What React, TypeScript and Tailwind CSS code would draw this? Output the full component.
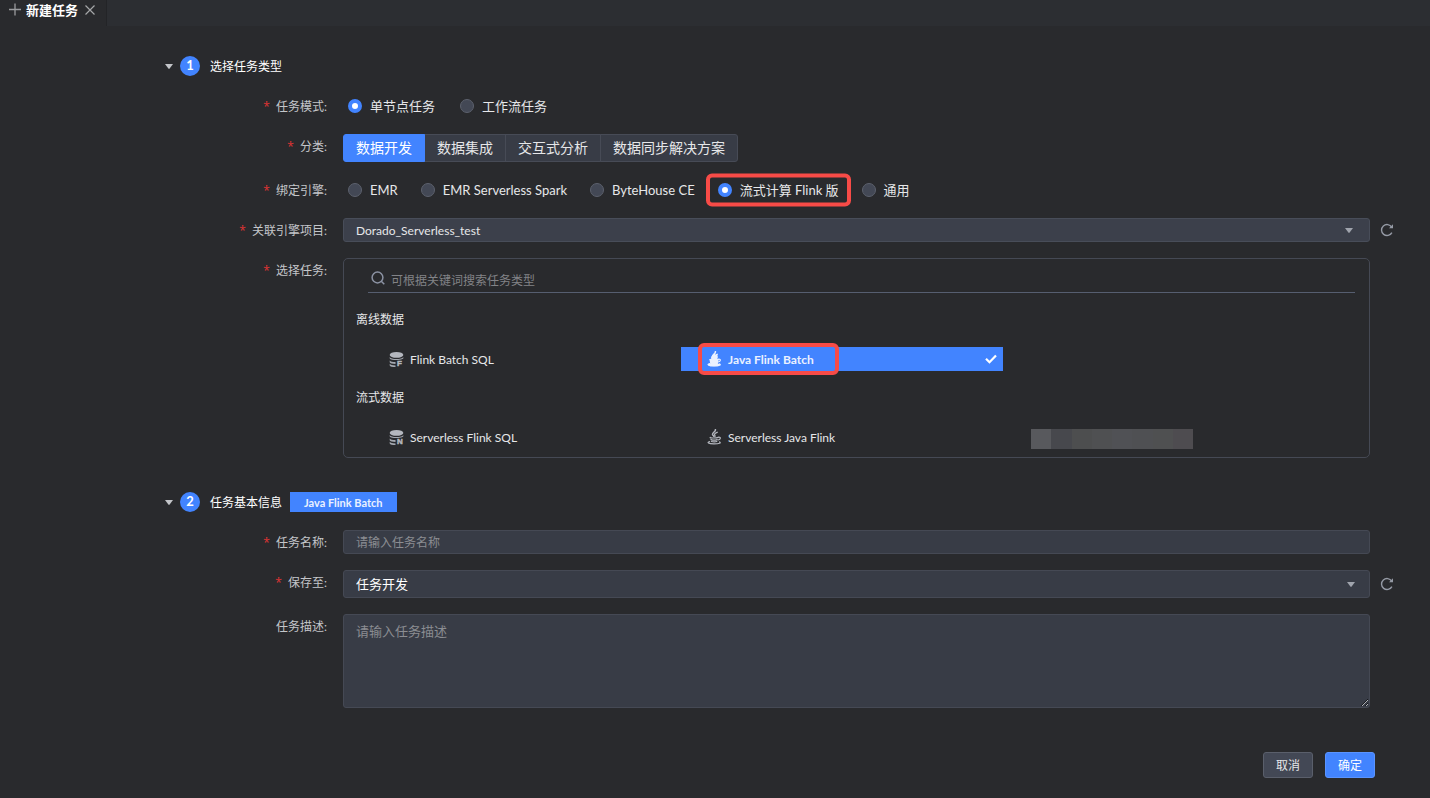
import { useState, type ReactNode } from "react";
import clsx from "clsx";

const modes = ["单节点任务", "工作流任务"];
const categories = ["数据开发", "数据集成", "交互式分析", "数据同步解决方案"];
const engines = ["EMR", "EMR Serverless Spark", "ByteHouse CE", "流式计算 Flink 版", "通用"];

const mosaic = [
  "bg-[#58595d]",
  "bg-[#47484d]",
  "bg-[#4d4e4f]",
  "bg-[#4f5052]",
  "bg-[#505155]",
  "bg-[#4f5053]",
  "bg-[#4f5051]",
  "bg-[#4e4c50]",
];

function Caret({ className }: { className?: string }) {
  return (
    <svg viewBox="0 0 8 5" className={clsx("h-[5px] w-2 shrink-0", className)} fill="currentColor" aria-hidden="true">
      <path d="M0 0h8L4.6 4.6a.8.8 0 0 1-1.2 0z" />
    </svg>
  );
}

function DatabaseIcon({ letter }: { letter: string }) {
  return (
    <svg viewBox="0 0 15 15" className="h-[15px] w-[15px] shrink-0 overflow-visible" aria-hidden="true">
      <ellipse cx="7.5" cy="2.900" rx="6.8" ry="2.9" fill="#b4b7be" />
      <path d="M.7 5c.8 1.500 3.200 2 6.800 2s6-.5 6.800-2v1.600c-1 1-3 1.200-5.300 1.400-4 .2-7.500-.4-8.300-1.600z" fill="#a4a8b0" />
      <path d="M.7 8.400c.8 1.100 2.800 1.600 5.800 1.700v1.800C3.500 11.900.9 11.300.7 10.200zM.7 11.700c.8 1.100 2.800 1.600 5.800 1.700v1.600C3.500 15 .9 14.600.7 13.500z" fill="#a4a8b0" />
      <text x="8" y="14" fontSize="8" fontWeight="700" fill="#b4b7be" stroke="#b4b7be" strokeWidth=".5" fontFamily="Liberation Sans, sans-serif">
        {letter}
      </text>
    </svg>
  );
}

function JavaIcon({ filled }: { filled?: boolean }) {
  return (
    <svg
      viewBox="0 0 15 16"
      className={clsx("h-4 w-[15px] shrink-0", filled ? "text-[#eaf1ff]" : "text-[#b4b7be]")}
      fill="none"
      stroke="currentColor"
      strokeLinecap="round"
      aria-hidden="true"
    >
      <path d="M8.400.6c.8 1.900-3.600 3-2.800 5 .3.700.9 1.100 1.200 1.700" strokeWidth="1.500" />
      <path d="M10.200 3.300C8 4.200 7.200 5 7.700 6c.3.500.5.900.2 1.400" strokeWidth="1.400" />
      <path d="M3.200 8.400c-1 .7 6 .9 8 0M11.600 8.200c2.600-.4 2.200 2.200-.4 2.800" strokeWidth="1.200" />
      <path d="M4 10.600c1.500.6 4.500.6 6.200 0M4.600 12.500c1.500.5 3.700.5 5.200 0" strokeWidth="1.300" />
      <path d="M2.600 12.600c-3 .8-1.600 2.200 4.400 2.200 5.400 0 7.400-.9 5.600-1.900" strokeWidth="1.200" />
      {filled && (
        <>
          <path d="M8.400.8c.7 2-5.400 3.600-4.200 7.200h6c1-1.400.6-2.600 0-4.700L8 4z" fill="currentColor" stroke="none" />
          <path d="M2.400 8h9.400l-1 4.600 2.800.6-2.200 2H3l-2.400-1.400 2.600-1.400z" fill="currentColor" stroke="none" />
        </>
      )}
    </svg>
  );
}

function RefreshButton() {
  return (
    <button type="button" aria-label="刷新" className="text-[#959aa5]">
      <svg viewBox="0 0 14 14" className="h-3.5 w-3.5" fill="none" stroke="currentColor" strokeWidth="1.400">
        <path d="M11.900 9.600a5.500 5.500 0 1 1-.2-5.500" />
        <path d="M13 1.300v4H9z" fill="currentColor" stroke="none" />
      </svg>
    </button>
  );
}

function SectionTitle({ step, title, children }: { step: number; title: string; children?: ReactNode }) {
  return (
    <div className="flex h-5 items-center">
      <Caret className="mr-[7px] ml-1 text-[#c3c5c9]" />
      <span className="flex h-5 w-5 items-center justify-center rounded-full bg-[#4284ff] text-[13px] font-bold text-white">
        {step}
      </span>
      <h2 className="ml-2.5 pt-0.5 text-xs text-white">{title}</h2>
      {children}
    </div>
  );
}

interface RowProps {
  label: string;
  htmlFor?: string;
  required?: boolean;
  extra?: ReactNode;
  children: ReactNode;
}

function Row({ label, htmlFor, required = true, extra, children }: RowProps) {
  const text = (
    <>
      {required && <span className="mr-1.5 font-['Open_Sans',sans-serif] text-xs text-[#e03434]">*</span>}
      {label}:
    </>
  );
  return (
    <div className="grid grid-cols-[179px_minmax(0,1fr)_24px]">
      <div className="h-6 pr-4 text-xs leading-[26px] text-[#c4c6ca]">
        {htmlFor ? (
          <label htmlFor={htmlFor} className="flex items-center justify-end">{text}</label>
        ) : (
          <span className="flex items-center justify-end">{text}</span>
        )}
      </div>
      {children}
      <div className="flex items-center pl-2.5">{extra}</div>
    </div>
  );
}

interface RadiosProps {
  name: string;
  options: string[];
  value: string;
  marked?: string;
  className?: string;
  onChange: (v: string) => void;
}

function Radios({ name, options, value, marked, className = "gap-[25px]", onChange }: RadiosProps) {
  return (
    <div className={clsx("flex h-6 items-center pl-[5px]", className)}>
      {options.map((o) => (
        <label key={o} className="relative flex items-center gap-2 text-[13px] whitespace-nowrap text-[#e6e7e9]">
          <input
            type="radio"
            name={name}
            checked={value === o}
            onChange={() => onChange(o)}
            className="h-3.5 w-3.5 appearance-none rounded-full border border-[#5c616d] bg-[#434855] checked:border-[4px] checked:border-[#4284ff] checked:bg-white"
          />
          <span className="pt-0.5">{o}</span>
          {marked === o && (
            <span className="pointer-events-none absolute -inset-x-3 top-1/2 h-[33px] -translate-y-1/2 rounded-md border-4 border-[#f74b47]" />
          )}
        </label>
      ))}
    </div>
  );
}

interface TaskItemProps {
  name: string;
  icon: ReactNode;
  selected?: boolean;
  onSelect: (v: string) => void;
}

function TaskItem({ name, icon, selected, onSelect }: TaskItemProps) {
  return (
    <button
      type="button"
      aria-pressed={selected}
      onClick={() => onSelect(name)}
      className={clsx(
        "flex h-6 items-center justify-between pr-1.5 pl-[26px] text-xs",
        selected ? "-mr-1 bg-[#4284ff] font-bold text-[#eaf1ff]" : "text-[#e6e7e9]"
      )}
    >
      <span className="relative flex items-center gap-1.5">
        {icon}
        <span className="pt-0.5">{name}</span>
        {selected && (
          <span className="pointer-events-none absolute top-1/2 -right-[25px] -left-[9px] h-8 -translate-y-1/2 rounded-md border-4 border-[#f74b47]" />
        )}
      </span>
      {selected && (
        <svg viewBox="0 0 12 10" className="h-2.5 w-3" fill="none" stroke="white" strokeWidth="2.200" aria-hidden="true">
          <path d="M1 4.800l3.500 3.500L11 1.500" />
        </svg>
      )}
    </button>
  );
}

export default function App() {
  const [mode, setMode] = useState("单节点任务");
  const [category, setCategory] = useState("数据开发");
  const [engine, setEngine] = useState("流式计算 Flink 版");
  const [task, setTask] = useState("Java Flink Batch");

  return (
    <div className="min-h-screen bg-[#292a2d] font-['Lato','Noto_Sans_CJK_SC',sans-serif] text-[#e6e7e9]">
      {/* Tab bar */}
      <header className="flex h-[26px] bg-[#2c2e32]">
        <div className="flex items-center border-r border-[#232427] bg-[#292a2d] pr-2.5 pb-1.5 pl-2">
          <svg viewBox="0 0 14 14" className="h-3.5 w-3.5" stroke="#9a9b9e" strokeWidth="1.300" aria-hidden="true">
            <path d="M7 .5v12M1 6.500h12" />
          </svg>
          <span className="ml-1 text-[13px] leading-5 font-bold text-white">新建任务</span>
          <button type="button" aria-label="关闭" className="ml-1.5">
            <svg viewBox="0 0 12 12" className="h-3 w-3" stroke="#a5a6a8" strokeWidth="1.200">
              <path d="M1.500 1.500l9 9M10.500 1.500l-9 9" />
            </svg>
          </button>
        </div>
      </header>

      <main className="pt-[30px] pr-9 pb-5 pl-[161px]">
        <SectionTitle step={1} title="选择任务类型" />
        <div className="mt-[18px] space-y-4 pl-[3px]">
          <Row label="任务模式">
            <Radios name="mode" options={modes} value={mode} onChange={setMode} />
          </Row>

          <Row label="分类">
            <div className="flex h-7">
              {categories.map((c) => (
                <button
                  key={c}
                  type="button"
                  aria-pressed={category === c}
                  onClick={() => setCategory(c)}
                  className={clsx(
                    "-ml-px border px-3 text-sm leading-[26px] whitespace-nowrap first:ml-0 first:rounded-l-[3px] last:rounded-r-[3px]",
                    category === c ? "relative border-[#4284ff] bg-[#4284ff] text-white" : "border-[#474b56] bg-[#383c46]"
                  )}
                >
                  {c}
                </button>
              ))}
            </div>
          </Row>

          <Row label="绑定引擎">
            <Radios
              name="engine"
              options={engines}
              value={engine}
              marked="流式计算 Flink 版"
              className="gap-[23px]"
              onChange={setEngine}
            />
          </Row>

          <Row label="关联引擎项目" htmlFor="project" extra={<RefreshButton />}>
            <div className="relative">
              <select
                id="project"
                className="block h-6 w-full appearance-none rounded-[3px] border border-[#484d59] bg-[#3c404b] px-3 pt-px text-xs text-[#e6e7e9]"
              >
                <option>Dorado_Serverless_test</option>
              </select>
              <Caret className="pointer-events-none absolute top-2.5 right-[17px] text-[#a0a4ad]" />
            </div>
          </Row>

          <Row label="选择任务" htmlFor="search">
            <div className="rounded-[5px] border border-[#454954] pb-2">
              <div className="mr-3.5 ml-6 flex h-[34px] items-center border-b border-[#565e70] pt-2 pl-[3px]">
                <svg viewBox="0 0 14 14" className="mb-1 h-3.5 w-3.5 shrink-0" fill="none" stroke="#8b92a3" strokeWidth="1.500" aria-hidden="true">
                  <circle cx="6.500" cy="6.500" r="5.400" />
                  <path d="M10.300 10.300l3 3" />
                </svg>
                <input
                  id="search"
                  placeholder="可根据关键词搜索任务类型"
                  className="ml-1.5 h-6 flex-1 bg-transparent pt-0.5 text-xs outline-none placeholder:text-[#828387]"
                />
              </div>

              <h3 className="mt-3.5 h-6 pl-3 text-xs leading-[26px]">离线数据</h3>
              <div className="mt-4 grid grid-cols-3 pr-[52px] pl-[19px]">
                <TaskItem name="Flink Batch SQL" icon={<DatabaseIcon letter="F" />} selected={task === "Flink Batch SQL"} onSelect={setTask} />
                <TaskItem name="Java Flink Batch" icon={<JavaIcon filled />} selected={task === "Java Flink Batch"} onSelect={setTask} />
              </div>

              <h3 className="mt-3.5 h-6 pl-3 text-xs leading-[26px]">流式数据</h3>
              <div className="mt-4 grid grid-cols-3 pr-[52px] pl-[19px]">
                <TaskItem name="Serverless Flink SQL" icon={<DatabaseIcon letter="N" />} selected={task === "Serverless Flink SQL"} onSelect={setTask} />
                <TaskItem name="Serverless Java Flink" icon={<JavaIcon />} selected={task === "Serverless Java Flink"} onSelect={setTask} />
                <div className="ml-8 flex h-5 w-[162px] self-end">
                  {mosaic.map((m) => (
                    <span key={m} className={clsx("flex-1", m)} />
                  ))}
                </div>
              </div>
            </div>
          </Row>
        </div>

        <div className="mt-[34px]">
          <SectionTitle step={2} title="任务基本信息">
            <span className="ml-2 h-5 bg-[#4284ff] px-3.5 text-[11px] leading-[22px] font-bold text-[#eaf1ff]">{task}</span>
          </SectionTitle>
        </div>
        <div className="mt-[18px] space-y-4 pl-[3px]">
          <Row label="任务名称" htmlFor="name">
            <input
              id="name"
              placeholder="请输入任务名称"
              className="h-6 w-full rounded-[3px] border border-[#454954] bg-[#383c46] px-3 pt-px text-xs outline-none placeholder:text-[#8b8d92]"
            />
          </Row>

          <Row label="保存至" htmlFor="folder" extra={<RefreshButton />}>
            <div className="relative">
              <select
                id="folder"
                className="block h-7 w-full appearance-none rounded-[3px] border border-[#454954] bg-[#383c46] px-3 pt-px text-[13px] text-white"
              >
                <option>任务开发</option>
              </select>
              <Caret className="pointer-events-none absolute top-3 right-[15px] text-[#a0a4ad]" />
            </div>
          </Row>

          <Row label="任务描述" htmlFor="desc" required={false}>
            <textarea
              id="desc"
              placeholder="请输入任务描述"
              className="block h-[94px] w-full rounded-[3px] border border-[#454954] bg-[#383c46] px-3 py-1.5 text-[13px] leading-5 outline-none placeholder:text-[#8b8d92]"
            />
          </Row>
        </div>

        <div className="mt-11 flex justify-end gap-3 pr-[19px] text-xs">
          <button type="button" className="h-[26px] w-[50px] rounded-[3px] border border-[#5a5f6b] bg-[#434855] pt-0.5">取消</button>
          <button type="button" className="h-[26px] w-[50px] rounded-[3px] border border-[#5a94ff] bg-[#4284ff] pt-0.5 text-white">确定</button>
        </div>
      </main>
    </div>
  );
}
